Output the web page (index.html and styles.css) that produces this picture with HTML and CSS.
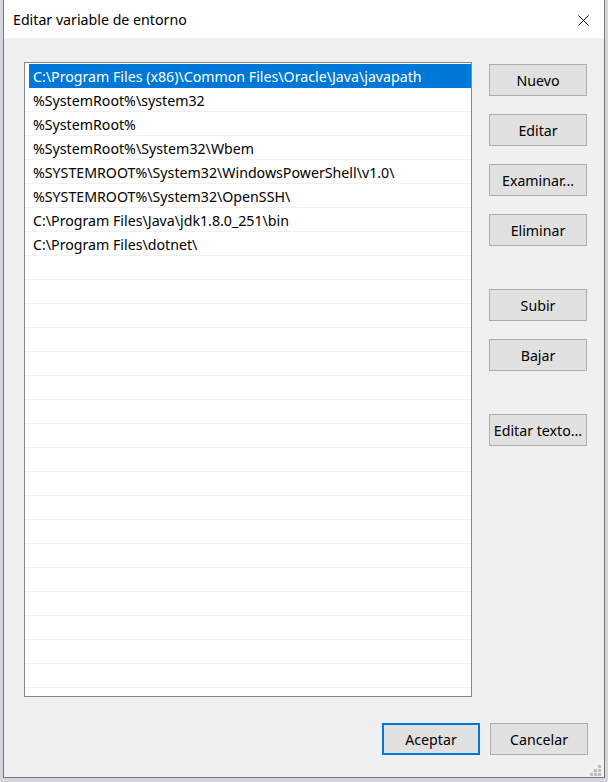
FILE: index.html
```html
<!DOCTYPE html>
<html lang="es">
<head>
    <meta charset="UTF-8">
    <meta name="viewport" content="width=device-width, initial-scale=1.0">
    <title>Editar variable de entorno</title>
    <link rel="stylesheet" href="styles.css">
</head>
<body>

    <div class="window">
        <div class="titlebar">
            <span class="title">Editar variable de entorno</span>
            <span class="close">
                <svg width="11" height="11" viewBox="0 0 11 11">
                    <path d="M0.5 0.5 L10.5 10.5 M10.5 0.5 L0.5 10.5" stroke="#000" stroke-width="1" fill="none"/>
                </svg>
            </span>
        </div>

        <div class="content">
            <div class="main">
                <ul class="list">
                    <li class="row selected"><span>C:\Program Files (x86)\Common Files\Oracle\Java\javapath</span></li>
                    <li class="row"><span>%SystemRoot%\system32</span></li>
                    <li class="row"><span>%SystemRoot%</span></li>
                    <li class="row"><span>%SystemRoot%\System32\Wbem</span></li>
                    <li class="row"><span>%SYSTEMROOT%\System32\WindowsPowerShell\v1.0\</span></li>
                    <li class="row"><span>%SYSTEMROOT%\System32\OpenSSH\</span></li>
                    <li class="row"><span>C:\Program Files\Java\jdk1.8.0_251\bin</span></li>
                    <li class="row"><span>C:\Program Files\dotnet\</span></li>
                    <li class="row"></li>
                    <li class="row"></li>
                    <li class="row"></li>
                    <li class="row"></li>
                    <li class="row"></li>
                    <li class="row"></li>
                    <li class="row"></li>
                    <li class="row"></li>
                    <li class="row"></li>
                    <li class="row"></li>
                    <li class="row"></li>
                    <li class="row"></li>
                    <li class="row"></li>
                    <li class="row"></li>
                    <li class="row"></li>
                    <li class="row"></li>
                    <li class="row"></li>
                    <li class="row"></li>
                    <li class="row"></li>
                </ul>

                <div class="actions">
                    <button class="btn">Nuevo</button>
                    <button class="btn">Editar</button>
                    <button class="btn">Examinar...</button>
                    <button class="btn">Eliminar</button>
                    <button class="btn group">Subir</button>
                    <button class="btn">Bajar</button>
                    <button class="btn group">Editar texto...</button>
                </div>
            </div>

            <div class="footer">
                <button class="btn default">Aceptar</button>
                <button class="btn">Cancelar</button>
            </div>
        </div>

        <!-- resize grip -->
        <svg class="grip" width="12" height="12" viewBox="0 0 12 12">
            <rect x="8" y="0" width="3" height="3" fill="#bdbdbd"/>
            <rect x="4" y="4" width="3" height="3" fill="#bdbdbd"/>
            <rect x="8" y="4" width="3" height="3" fill="#bdbdbd"/>
            <rect x="0" y="8" width="3" height="3" fill="#bdbdbd"/>
            <rect x="4" y="8" width="3" height="3" fill="#bdbdbd"/>
            <rect x="8" y="8" width="3" height="3" fill="#bdbdbd"/>
        </svg>
    </div>

</body>
</html>
```

FILE: styles.css
```css
/* Windows-like dialog */

body {
margin: 0;
padding: 0;
background-color: #d3d7dc;
font-family: 'Noto Sans', 'Liberation Sans', sans-serif;
font-size: 14.2px;
color: #000;
overflow: hidden;
}

.window {
position: relative;
margin-left: 3px;
width: 602px;
height: 778px;
box-sizing: border-box;
border: 1px solid #777;
border-top: none;
background-color: #f0f0f0;
display: flex;
flex-direction: column;
}

.titlebar {
height: 38px;
flex: none;
background-color: #fff;
display: flex;
align-items: center;
justify-content: space-between;
padding: 0 15px 0 9px;
}

.title {
font-size: 14.2px;
}

.close {
display: flex;
margin-top: 3px;
}

.content {
flex: 1;
padding: 24px 16px 0 20px;
display: flex;
flex-direction: column;
}

.main {
display: flex;
height: 635px;
}

.list {
list-style: none;
margin: 0;
padding: 1px 0 0 0;
width: 448px;
height: 635px;
box-sizing: border-box;
border: 1px solid #828790;
background-color: #fff;
overflow: hidden;
}

.row {
height: 24px;
box-sizing: border-box;
border-bottom: 1px solid #f0f0f0;
padding-left: 4px;
}

.row span {
display: block;
height: 24px;
line-height: 26px;
padding-left: 4px;
white-space: nowrap;
overflow: hidden;
}

.row.selected {
border-bottom: none;
}

.row.selected span {
background-color: #0078d7;
color: #fff;
}

.actions {
margin-left: 17px;
padding-top: 2px;
display: flex;
flex-direction: column;
gap: 18px;
}

.btn {
width: 98px;
height: 32px;
box-sizing: border-box;
background-color: #e1e1e1;
border: 1px solid #adadad;
border-radius: 0;
font-family: inherit;
font-size: 14.2px;
color: #000;
padding: 0;
}

.btn.group {
margin-top: 25px;
}

.btn.default {
border: 2px solid #0078d7;
}

.footer {
margin-top: 26px;
display: flex;
justify-content: flex-end;
gap: 10px;
}

.grip {
position: absolute;
right: 2px;
bottom: 0;
}
```
